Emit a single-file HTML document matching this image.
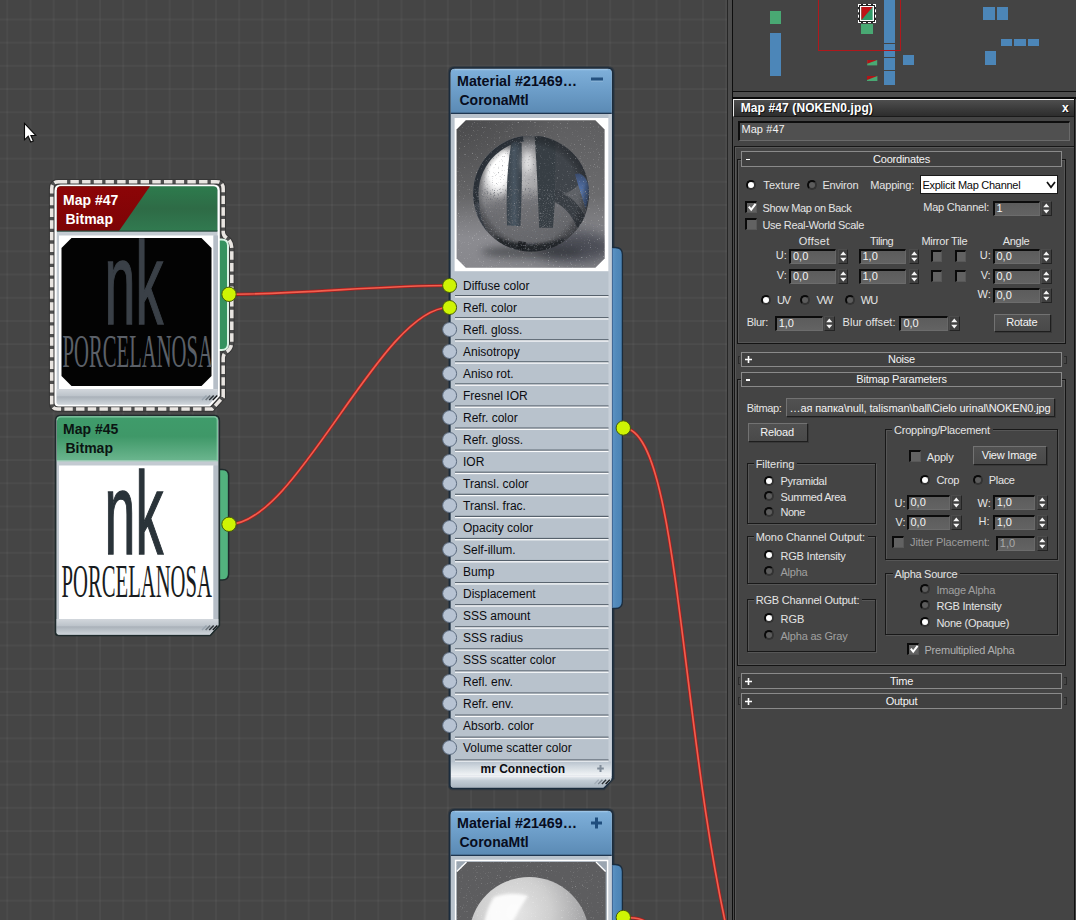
<!DOCTYPE html>
<html lang="en"><head><meta charset="utf-8"><title>Slate Material Editor</title>
<style>
*{box-sizing:border-box;margin:0;padding:0}
html,body{width:1076px;height:920px;overflow:hidden;background:#454545}
body{font-family:"Liberation Sans",sans-serif;font-size:11px;color:#e6e6e6;position:relative}
#root{position:absolute;left:0;top:0;width:1076px;height:920px;overflow:hidden}
#canvas{position:absolute;left:0;top:0;width:727px;height:920px;background-color:#454545;
 background-image:linear-gradient(90deg,rgba(255,255,255,.025) 0,rgba(255,255,255,.045) 1px,rgba(255,255,255,.025) 2px,transparent 2px),linear-gradient(180deg,rgba(255,255,255,.025) 0,rgba(255,255,255,.045) 1px,rgba(255,255,255,.025) 2px,transparent 2px);
 background-size:23.2px 23.2px;background-position:6.3px 18.5px;overflow:hidden}
#panel{position:absolute;left:727px;top:0;width:349px;height:920px;background:#444}
.t{position:absolute;white-space:nowrap;font-size:11px;line-height:13px;color:#e4e4e4}
.sh{text-shadow:1px 1px 0 #111}
</style></head>
<body><div id="root">
<div id="canvas">
<svg width="727" height="920" viewBox="0 0 727 920" style="position:absolute;left:0;top:0" font-family="Liberation Sans, sans-serif">
<defs>
<linearGradient id="gh47" x1="0" y1="0" x2="0" y2="1"><stop offset="0" stop-color="#2d7b4d"/><stop offset=".5" stop-color="#2e6b46"/><stop offset="1" stop-color="#317a50"/></linearGradient>
<linearGradient id="gh45" x1="0" y1="0" x2="0" y2="1"><stop offset="0" stop-color="#3f9c6b"/><stop offset=".45" stop-color="#3f9868"/><stop offset="1" stop-color="#6cb68f"/></linearGradient>
<linearGradient id="gred" x1="0" y1="0" x2="0" y2="1"><stop offset="0" stop-color="#8c0507"/><stop offset="1" stop-color="#7d0406"/></linearGradient>
<linearGradient id="gbot" x1="0" y1="0" x2="0" y2="1"><stop offset="0" stop-color="#d2d7dc"/><stop offset=".45" stop-color="#bcc3ca"/><stop offset=".5" stop-color="#a9b1b9"/><stop offset="1" stop-color="#cfd5da"/></linearGradient>
<linearGradient id="ghm1" x1="0" y1="0" x2="0" y2="1"><stop offset="0" stop-color="#7fb0da"/><stop offset=".5" stop-color="#6c9dc8"/><stop offset="1" stop-color="#5b8ab4"/></linearGradient>
<linearGradient id="ghm2" x1="0" y1="0" x2="0" y2="1"><stop offset="0" stop-color="#7fb0da"/><stop offset=".5" stop-color="#6c9dc8"/><stop offset="1" stop-color="#5b8ab4"/></linearGradient>
<linearGradient id="gtab" x1="0" y1="0" x2="1" y2="0"><stop offset="0" stop-color="#5e95c6"/><stop offset=".4" stop-color="#528abb"/><stop offset="1" stop-color="#4a82b4"/></linearGradient>
<linearGradient id="gbg1" x1="0" y1="0" x2="0" y2="1"><stop offset="0" stop-color="#5d5d5f"/><stop offset=".5" stop-color="#6b6b6d"/><stop offset=".78" stop-color="#8b8b90"/><stop offset="1" stop-color="#87878c"/></linearGradient>
<radialGradient id="gbg1b" cx="0" cy="0" r=".7"><stop offset="0" stop-color="#000" stop-opacity=".22"/><stop offset="1" stop-color="#000" stop-opacity="0"/></radialGradient>
<radialGradient id="gsph1" cx=".4" cy=".42" r=".62"><stop offset="0" stop-color="#bcbcbe"/><stop offset=".5" stop-color="#939396"/><stop offset=".82" stop-color="#6a6e73"/><stop offset="1" stop-color="#464a50"/></radialGradient>
<linearGradient id="gstem" x1="0" y1="0" x2="1" y2="0"><stop offset="0" stop-color="#39424a"/><stop offset=".5" stop-color="#485561"/><stop offset="1" stop-color="#363e46"/></linearGradient>
<linearGradient id="gblue" x1="0" y1="0" x2="1" y2="1"><stop offset="0" stop-color="#3a4868"/><stop offset=".5" stop-color="#5f84c4"/><stop offset="1" stop-color="#34486c"/></linearGradient>
<filter id="blurA" x="-50%" y="-50%" width="200%" height="200%"><feGaussianBlur stdDeviation="38"/></filter>
<filter id="blurB" x="-50%" y="-50%" width="200%" height="200%"><feGaussianBlur stdDeviation="22"/></filter>
<filter id="blurC" x="-50%" y="-50%" width="200%" height="200%"><feGaussianBlur stdDeviation="10"/></filter>
<filter id="blurE" x="-20%" y="-20%" width="140%" height="140%"><feGaussianBlur stdDeviation="3"/></filter>
<filter id="blurD" x="-50%" y="-50%" width="200%" height="200%"><feGaussianBlur stdDeviation="6"/></filter>
<filter id="noiseD2" x="0" y="0" width="100%" height="100%"><feTurbulence type="fractalNoise" baseFrequency="0.12" numOctaves="2" seed="23"/><feColorMatrix type="matrix" values="0 0 0 0 0.15  0 0 0 0 0.16  0 0 0 0 0.18  0 4 0 0 -2.2"/></filter>
<filter id="noiseD" x="0" y="0" width="100%" height="100%"><feTurbulence type="fractalNoise" baseFrequency="0.11" numOctaves="2" seed="11"/><feColorMatrix type="matrix" values="0 0 0 0 0.12  0 0 0 0 0.13  0 0 0 0 0.15  0 5 0 0 -3.2"/></filter>
<radialGradient id="grim1" cx=".5" cy=".5" r=".5"><stop offset=".82" stop-color="#000" stop-opacity="0"/><stop offset="1" stop-color="#1a1d22" stop-opacity=".5"/></radialGradient>
<linearGradient id="gmr" x1="0" y1="0" x2="0" y2="1"><stop offset="0" stop-color="#b9c3ce"/><stop offset=".35" stop-color="#cfd7de"/><stop offset="1" stop-color="#f1f4f6"/></linearGradient>
<linearGradient id="gbot2" x1="0" y1="0" x2="0" y2="1"><stop offset="0" stop-color="#e3e8ed"/><stop offset=".35" stop-color="#c2ccd5"/><stop offset="1" stop-color="#aab5c0"/></linearGradient>
<filter id="blur3" x="-50%" y="-50%" width="200%" height="200%"><feGaussianBlur stdDeviation="3.2"/></filter>
<filter id="blur4" x="-50%" y="-50%" width="200%" height="200%"><feGaussianBlur stdDeviation="5"/></filter>
<filter id="noise" x="0" y="0" width="100%" height="100%"><feTurbulence type="fractalNoise" baseFrequency="0.13" numOctaves="2" seed="3"/><feColorMatrix type="matrix" values="0 0 0 0 1  0 0 0 0 1  0 0 0 0 1  5 0 0 0 -3.35"/></filter>
<clipPath id="clip47"><path d="M71.5,238 H201.5 L211.5,248 V376 L201.5,386 H71.5 L61.5,376 V248 Z"/></clipPath>
<clipPath id="clip45"><rect x="59" y="465.5" width="154.5" height="153.5"/></clipPath>
<clipPath id="clipM1"><path d="M465.8,120.2 H595.4 L604.6,129.4 V258.6 L595.4,267.8 H465.8 L456.6,258.6 V129.4 Z"/></clipPath>
<clipPath id="clipS1"><circle cx="455" cy="452" r="347"/></clipPath>
<radialGradient id="gsph2" cx=".38" cy=".3" r=".75"><stop offset="0" stop-color="#e6e6e6"/><stop offset=".4" stop-color="#cfcfcf"/><stop offset=".8" stop-color="#a2a2a4"/><stop offset="1" stop-color="#77777a"/></radialGradient><filter id="blurS" x="-30%" y="-30%" width="160%" height="160%"><feGaussianBlur stdDeviation="1.6"/></filter><filter id="noise2" x="0" y="0" width="100%" height="100%"><feTurbulence type="fractalNoise" baseFrequency="0.8" numOctaves="2" seed="5"/><feColorMatrix type="matrix" values="0 0 0 0 1  0 0 0 0 1  0 0 0 0 1  5 0 0 0 -3.3"/></filter>
</defs>
<path d="M229,294.3 C297,294.3 381,285.5 449,285.5" fill="none" stroke="#a81d1d" stroke-width="3.2"/><path d="M229,294.3 C297,294.3 381,285.5 449,285.5" fill="none" stroke="#f0604f" stroke-width="1.6"/>
<path d="M229,524.3 C297,524.3 381,307.5 449,307.5" fill="none" stroke="#a81d1d" stroke-width="3.2"/><path d="M229,524.3 C297,524.3 381,307.5 449,307.5" fill="none" stroke="#f0604f" stroke-width="1.6"/>
<path d="M623.3,428 C679.7,428 679.8,734.6 731.4,949.5" fill="none" stroke="#a81d1d" stroke-width="3.2"/><path d="M623.3,428 C679.7,428 679.8,734.6 731.4,949.5" fill="none" stroke="#f0604f" stroke-width="1.6"/>
<path d="M623,917.5 C640,917.5 646,919 652,930" fill="none" stroke="#a81d1d" stroke-width="3.2"/><path d="M623,917.5 C640,917.5 646,919 652,930" fill="none" stroke="#f0604f" stroke-width="1.6"/>
<path d="M58.7,181.7 H216.2 Q223.2,181.7 223.2,188.7 V232 Q223.2,236 226.2,237.5 Q231.8,241 231.8,249 V341 Q231.8,349 226.2,352 Q223.2,354 223.2,358 V397 L212.2,409 H57.7 Q51.7,409 51.7,403 V188.7 Q51.7,181.7 58.7,181.7 Z" fill="none" stroke="#363636" stroke-width="5.6"/><path d="M58.7,181.7 H216.2 Q223.2,181.7 223.2,188.7 V232 Q223.2,236 226.2,237.5 Q231.8,241 231.8,249 V341 Q231.8,349 226.2,352 Q223.2,354 223.2,358 V397 L212.2,409 H57.7 Q51.7,409 51.7,403 V188.7 Q51.7,181.7 58.7,181.7 Z" fill="none" stroke="#4e4e4e" stroke-width="3.5"/><path d="M58.7,181.7 H216.2 Q223.2,181.7 223.2,188.7 V232 Q223.2,236 226.2,237.5 Q231.8,241 231.8,249 V341 Q231.8,349 226.2,352 Q223.2,354 223.2,358 V397 L212.2,409 H57.7 Q51.7,409 51.7,403 V188.7 Q51.7,181.7 58.7,181.7 Z" fill="none" stroke="#e9e5e1" stroke-width="3.5" stroke-dasharray="8.4 3.3"/>
<path d="M217.7,239.5 H221.7 Q228.0,239.5 228.0,245.5 V344 Q228.0,350 221.7,350 H217.7 Z" fill="#35925f" stroke="#d8f3e4" stroke-width="2"/>
<path d="M60.6,185.7 H213.7 Q218.7,185.7 218.7,190.7 V395.5 L209.7,405.5 H58.6 Q55.6,405.5 55.6,402.5 V190.7 Q55.6,185.7 60.6,185.7 Z" fill="#c3cad1" stroke="#ffffff" stroke-width="2.2"/>
<path d="M60.9,186.3 H213.39999999999998 Q217.39999999999998,186.3 217.39999999999998,190.3 V231 H56.9 V190.3 Q56.9,186.3 60.9,186.3 Z" fill="url(#gh47)"/>
<path d="M60.9,186.3 H150 L119,231 H56.9 V190.3 Q56.9,186.3 60.9,186.3 Z" fill="url(#gred)"/>
<rect x="56.9" y="230.5" width="160.49999999999997" height="1.2" fill="#24483a"/>
<text x="63" y="205.3" font-size="14" font-weight="bold" fill="#ffffff">Map #47</text>
<text x="65.5" y="224.4" font-size="14" font-weight="bold" fill="#ffffff">Bitmap</text>
<rect x="59" y="235.5" width="154.5" height="153.5" fill="#ffffff"/>
<rect x="213.5" y="235.5" width="4.5" height="155.5" fill="#b6bec7"/>
<path d="M56.6,389 H217.7 V395.0 L209.2,404.5 H58.6 Q56.6,404.5 56.6,402.5 Z" fill="url(#gbot)"/>
<path d="M202.0,400.0 l4.5,-4.5" stroke="#9aa5b0" stroke-width="1.4"/>
<path d="M205.6,400.0 l4.5,-4.5" stroke="#6b747c" stroke-width="1.4"/>
<path d="M209.2,400.0 l4.5,-4.5" stroke="#2a2f33" stroke-width="1.4"/>
<path d="M212.8,400.0 l4.5,-4.5" stroke="#15181a" stroke-width="1.4"/>
<path d="M71.5,238 H201.5 L211.5,248 V376 L201.5,386 H71.5 L61.5,376 V248 Z" fill="#030303"/>
<g clip-path="url(#clip47)">
<text transform="translate(104.5,323.5) scale(0.475,1)" font-size="117" fill="#3a4047" stroke="#3a4047" stroke-width="1.6">nk</text>
<text transform="translate(62.5,367) scale(0.44,1)" font-family="Liberation Serif,serif" font-size="47" fill="#5b6068">PORCELANOSA</text>
</g>
<circle cx="229" cy="294.3" r="7.2" fill="#cef404" stroke="#46590a" stroke-width="1"/>
<path d="M218.29999999999998,469.5 H222.29999999999998 Q228.6,469.5 228.6,475.5 V574 Q228.6,580 222.29999999999998,580 H218.29999999999998 Z" fill="#52b27e" stroke="#1f2b2c" stroke-width="1.5"/>
<path d="M60.6,415.7 H214.29999999999998 Q219.29999999999998,415.7 219.29999999999998,420.7 V625.5 L210.29999999999998,635.5 H58.6 Q55.6,635.5 55.6,632.5 V420.7 Q55.6,415.7 60.6,415.7 Z" fill="#c3cad1" stroke="#1f2b2c" stroke-width="1.7"/>
<path d="M60.9,416.3 H213.99999999999997 Q217.99999999999997,416.3 217.99999999999997,420.3 V461 H56.9 V420.3 Q56.9,416.3 60.9,416.3 Z" fill="url(#gh45)"/>
<rect x="56.9" y="460.2" width="161.09999999999997" height="1.3" fill="#a3cfbb"/>
<path d="M57.1,420.3 Q57.1,416.90000000000003 60.9,416.90000000000003 H213.99999999999997 Q217.29999999999998,416.90000000000003 217.29999999999998,420.3 V461" fill="none" stroke="#8fd0ae" stroke-width="1.3" opacity=".85"/>
<text x="63" y="434.3" font-size="14" font-weight="bold" fill="#0b1512">Map #45</text>
<text x="65.5" y="453.4" font-size="14" font-weight="bold" fill="#0b1512">Bitmap</text>
<rect x="59" y="465.5" width="154.5" height="153.5" fill="#ffffff"/>
<rect x="213.5" y="465.5" width="4.5" height="155.5" fill="#b6bec7"/>
<path d="M56.6,619 H218.29999999999998 V625.0 L209.79999999999998,634.5 H58.6 Q56.6,634.5 56.6,632.5 Z" fill="url(#gbot)"/>
<path d="M202.0,630.0 l4.5,-4.5" stroke="#9aa5b0" stroke-width="1.4"/>
<path d="M205.6,630.0 l4.5,-4.5" stroke="#6b747c" stroke-width="1.4"/>
<path d="M209.2,630.0 l4.5,-4.5" stroke="#2a2f33" stroke-width="1.4"/>
<path d="M212.8,630.0 l4.5,-4.5" stroke="#15181a" stroke-width="1.4"/>
<g clip-path="url(#clip45)">
<text transform="translate(104.5,553.5) scale(0.475,1)" font-size="117" fill="#2a3339" stroke="#2a3339" stroke-width="1.6">nk</text>
<text transform="translate(61.5,597) scale(0.44,1)" font-family="Liberation Serif,serif" font-size="47" fill="#181c20">PORCELANOSA</text>
</g>
<circle cx="229" cy="524.3" r="7.2" fill="#cef404" stroke="#46590a" stroke-width="1"/>
<path d="M454.8,68 H607.7 Q612.7,68 612.7,73 V778.3 L603.7,788.3 H452.8 Q449.8,788.3 449.8,785.3 V73 Q449.8,68 454.8,68 Z" fill="none" stroke="#26313c" stroke-width="4" opacity=".55"/>
<path d="M454.8,68 H607.7 Q612.7,68 612.7,73 V778.3 L603.7,788.3 H452.8 Q449.8,788.3 449.8,785.3 V73 Q449.8,68 454.8,68 Z" fill="#b8c2cc" stroke="#1b2c3d" stroke-width="1.7"/>
<path d="M611.8000000000001,247.5 H615.4 Q622.4,247.5 622.4,254.5 V601.5 Q622.4,608.5 615.4,608.5 H611.8000000000001" fill="url(#gtab)" stroke="#1b2c3d" stroke-width="1.3"/><path d="M612.3000000000001,248.2 V607.8" stroke="#3d628f" stroke-width="1.1"/>
<rect x="608.5" y="114" width="3.3" height="662.3" fill="#c7cfd8"/>
<path d="M454.8,69 H607.7 Q611.7,69 611.7,73 V113 H450.8 V73 Q450.8,69 454.8,69 Z" fill="url(#ghm1)"/>
<path d="M454.8,69.7 H607.7" stroke="#9cc4e6" stroke-width="1.2"/>
<rect x="450.8" y="112.7" width="160.90000000000003" height="1.3" fill="#1f3650"/>
<text x="457" y="86.4" font-size="14" font-weight="bold" fill="#080d20" textLength="120" lengthAdjust="spacingAndGlyphs">Material #21469…</text>
<text x="459.5" y="105.4" font-size="14" font-weight="bold" fill="#080d20">CoronaMtl</text>
<rect x="591" y="77.5" width="12" height="3.2" fill="#24517f"/><rect x="591" y="80.7" width="12" height="1" fill="#8db5d8"/>
<rect x="454.6" y="118" width="153.8" height="153.2" fill="#ffffff"/>
<g clip-path="url(#clipM1)">
<g transform="translate(455,118) scale(0.16739)">
<rect x="0" y="0" width="920" height="920" fill="url(#gbg1)"/>
<rect x="0" y="0" width="920" height="920" fill="url(#gbg1b)"/>
<ellipse cx="720" cy="770" rx="230" ry="95" fill="#3b3c46" opacity=".8" filter="url(#blurA)"/>
<ellipse cx="460" cy="800" rx="300" ry="40" fill="#2f3036" opacity=".55" filter="url(#blurB)"/>
<g clip-path="url(#clipS1)">
<circle cx="455" cy="452" r="347" fill="url(#gsph1)"/>
<ellipse cx="450" cy="640" rx="360" ry="190" fill="#66666a" opacity=".8" filter="url(#blurA)"/>
<ellipse cx="262" cy="310" rx="88" ry="150" fill="#ffffff" opacity=".85" filter="url(#blurB)" transform="rotate(8 262 310)"/>
<ellipse cx="262" cy="302" rx="62" ry="108" fill="#ffffff" filter="url(#blurC)" transform="rotate(8 262 302)"/>
<path d="M100,520 A347,347 0 0 1 405,108 L411,140 A315,315 0 0 0 145,507 Z" fill="#39414a" filter="url(#blurE)"/>
<path d="M100,520 C110,600 140,660 180,700 L190,672 C160,620 148,565 145,507 Z" fill="#4c5560" opacity=".85"/>
<path d="M337,150 C356,141 380,141 398,150 C402,300 399,480 391,646 L311,642 C305,480 309,300 337,150Z" fill="url(#gstem)"/>
<ellipse cx="436" cy="262" rx="30" ry="68" fill="#ffffff" opacity=".8" filter="url(#blurB)"/>
<path d="M476,112 C520,104 562,106 602,122 C608,300 600,500 585,656 L503,656 C496,480 490,300 476,112Z" fill="#373e44"/>
<path d="M600,120 C690,150 760,230 795,335 C740,410 690,450 598,480 Z" fill="#3f444a"/>
<path d="M598,430 C690,455 745,520 778,590 C768,625 752,655 738,670 C700,585 655,525 596,505Z" fill="#383d43"/>
<path d="M640,455 C690,440 720,420 745,395 C770,440 780,500 778,590 C745,520 700,470 640,455Z" fill="#5a5d62" opacity=".8"/>
<path d="M716,335 C750,322 782,348 797,400 C803,450 795,500 780,540 C762,480 738,410 716,335Z" fill="url(#gblue)"/>
<path d="M235,700 C330,755 480,780 660,715 L620,790 C500,822 350,812 262,748Z" fill="#22262b" opacity=".85" filter="url(#blurD)"/>
<path d="M380,735 L425,742 L408,792 L370,786Z" fill="#1c1f23" opacity=".85"/>
<circle cx="455" cy="452" r="347" fill="url(#grim1)"/>
<circle cx="455" cy="452" r="347" filter="url(#noiseD)" opacity=".5"/>
<rect x="100" y="430" width="720" height="380" filter="url(#noiseD2)" opacity=".75"/>
</g>
<rect x="0" y="0" width="920" height="920" filter="url(#noise)" opacity=".3"/>
</g>
</g>
<rect x="455" y="295.00" width="153.5" height="1.25" fill="#56616c"/><rect x="455" y="296.20" width="153.5" height="1.3" fill="#fafbfc"/>
<circle cx="449.6" cy="285.5" r="7" fill="#cef404" stroke="#46590a" stroke-width="1"/>
<text x="463" y="289.8" font-size="12" fill="#0c0c10">Diffuse color</text>
<rect x="455" y="317.08" width="153.5" height="1.25" fill="#56616c"/><rect x="455" y="318.28" width="153.5" height="1.3" fill="#fafbfc"/>
<circle cx="449.6" cy="307.5" r="7" fill="#cef404" stroke="#46590a" stroke-width="1"/>
<text x="463" y="311.8" font-size="12" fill="#0c0c10">Refl. color</text>
<rect x="455" y="339.16" width="153.5" height="1.25" fill="#56616c"/><rect x="455" y="340.36" width="153.5" height="1.3" fill="#fafbfc"/>
<circle cx="449.6" cy="329.5" r="7" fill="#b7c3d3" stroke="#5d6c80" stroke-width="1"/>
<text x="463" y="333.8" font-size="12" fill="#0c0c10">Refl. gloss.</text>
<rect x="455" y="361.24" width="153.5" height="1.25" fill="#56616c"/><rect x="455" y="362.44" width="153.5" height="1.3" fill="#fafbfc"/>
<circle cx="449.6" cy="351.5" r="7" fill="#b7c3d3" stroke="#5d6c80" stroke-width="1"/>
<text x="463" y="355.8" font-size="12" fill="#0c0c10">Anisotropy</text>
<rect x="455" y="383.32" width="153.5" height="1.25" fill="#56616c"/><rect x="455" y="384.52" width="153.5" height="1.3" fill="#fafbfc"/>
<circle cx="449.6" cy="373.5" r="7" fill="#b7c3d3" stroke="#5d6c80" stroke-width="1"/>
<text x="463" y="377.8" font-size="12" fill="#0c0c10">Aniso rot.</text>
<rect x="455" y="405.40" width="153.5" height="1.25" fill="#56616c"/><rect x="455" y="406.60" width="153.5" height="1.3" fill="#fafbfc"/>
<circle cx="449.6" cy="395.5" r="7" fill="#b7c3d3" stroke="#5d6c80" stroke-width="1"/>
<text x="463" y="399.8" font-size="12" fill="#0c0c10">Fresnel IOR</text>
<rect x="455" y="427.48" width="153.5" height="1.25" fill="#56616c"/><rect x="455" y="428.68" width="153.5" height="1.3" fill="#fafbfc"/>
<circle cx="449.6" cy="417.5" r="7" fill="#b7c3d3" stroke="#5d6c80" stroke-width="1"/>
<text x="463" y="421.8" font-size="12" fill="#0c0c10">Refr. color</text>
<rect x="455" y="449.56" width="153.5" height="1.25" fill="#56616c"/><rect x="455" y="450.76" width="153.5" height="1.3" fill="#fafbfc"/>
<circle cx="449.6" cy="439.5" r="7" fill="#b7c3d3" stroke="#5d6c80" stroke-width="1"/>
<text x="463" y="443.8" font-size="12" fill="#0c0c10">Refr. gloss.</text>
<rect x="455" y="471.64" width="153.5" height="1.25" fill="#56616c"/><rect x="455" y="472.84" width="153.5" height="1.3" fill="#fafbfc"/>
<circle cx="449.6" cy="461.5" r="7" fill="#b7c3d3" stroke="#5d6c80" stroke-width="1"/>
<text x="463" y="465.8" font-size="12" fill="#0c0c10">IOR</text>
<rect x="455" y="493.72" width="153.5" height="1.25" fill="#56616c"/><rect x="455" y="494.92" width="153.5" height="1.3" fill="#fafbfc"/>
<circle cx="449.6" cy="483.5" r="7" fill="#b7c3d3" stroke="#5d6c80" stroke-width="1"/>
<text x="463" y="487.8" font-size="12" fill="#0c0c10">Transl. color</text>
<rect x="455" y="515.80" width="153.5" height="1.25" fill="#56616c"/><rect x="455" y="517.00" width="153.5" height="1.3" fill="#fafbfc"/>
<circle cx="449.6" cy="505.5" r="7" fill="#b7c3d3" stroke="#5d6c80" stroke-width="1"/>
<text x="463" y="509.8" font-size="12" fill="#0c0c10">Transl. frac.</text>
<rect x="455" y="537.88" width="153.5" height="1.25" fill="#56616c"/><rect x="455" y="539.08" width="153.5" height="1.3" fill="#fafbfc"/>
<circle cx="449.6" cy="527.5" r="7" fill="#b7c3d3" stroke="#5d6c80" stroke-width="1"/>
<text x="463" y="531.8" font-size="12" fill="#0c0c10">Opacity color</text>
<rect x="455" y="559.96" width="153.5" height="1.25" fill="#56616c"/><rect x="455" y="561.16" width="153.5" height="1.3" fill="#fafbfc"/>
<circle cx="449.6" cy="549.5" r="7" fill="#b7c3d3" stroke="#5d6c80" stroke-width="1"/>
<text x="463" y="553.8" font-size="12" fill="#0c0c10">Self-illum.</text>
<rect x="455" y="582.04" width="153.5" height="1.25" fill="#56616c"/><rect x="455" y="583.24" width="153.5" height="1.3" fill="#fafbfc"/>
<circle cx="449.6" cy="571.5" r="7" fill="#b7c3d3" stroke="#5d6c80" stroke-width="1"/>
<text x="463" y="575.8" font-size="12" fill="#0c0c10">Bump</text>
<rect x="455" y="604.12" width="153.5" height="1.25" fill="#56616c"/><rect x="455" y="605.32" width="153.5" height="1.3" fill="#fafbfc"/>
<circle cx="449.6" cy="593.5" r="7" fill="#b7c3d3" stroke="#5d6c80" stroke-width="1"/>
<text x="463" y="597.8" font-size="12" fill="#0c0c10">Displacement</text>
<rect x="455" y="626.20" width="153.5" height="1.25" fill="#56616c"/><rect x="455" y="627.40" width="153.5" height="1.3" fill="#fafbfc"/>
<circle cx="449.6" cy="615.5" r="7" fill="#b7c3d3" stroke="#5d6c80" stroke-width="1"/>
<text x="463" y="619.8" font-size="12" fill="#0c0c10">SSS amount</text>
<rect x="455" y="648.28" width="153.5" height="1.25" fill="#56616c"/><rect x="455" y="649.48" width="153.5" height="1.3" fill="#fafbfc"/>
<circle cx="449.6" cy="637.5" r="7" fill="#b7c3d3" stroke="#5d6c80" stroke-width="1"/>
<text x="463" y="641.8" font-size="12" fill="#0c0c10">SSS radius</text>
<rect x="455" y="670.36" width="153.5" height="1.25" fill="#56616c"/><rect x="455" y="671.56" width="153.5" height="1.3" fill="#fafbfc"/>
<circle cx="449.6" cy="659.5" r="7" fill="#b7c3d3" stroke="#5d6c80" stroke-width="1"/>
<text x="463" y="663.8" font-size="12" fill="#0c0c10">SSS scatter color</text>
<rect x="455" y="692.44" width="153.5" height="1.25" fill="#56616c"/><rect x="455" y="693.64" width="153.5" height="1.3" fill="#fafbfc"/>
<circle cx="449.6" cy="681.5" r="7" fill="#b7c3d3" stroke="#5d6c80" stroke-width="1"/>
<text x="463" y="685.8" font-size="12" fill="#0c0c10">Refl. env.</text>
<rect x="455" y="714.52" width="153.5" height="1.25" fill="#56616c"/><rect x="455" y="715.72" width="153.5" height="1.3" fill="#fafbfc"/>
<circle cx="449.6" cy="703.5" r="7" fill="#b7c3d3" stroke="#5d6c80" stroke-width="1"/>
<text x="463" y="707.8" font-size="12" fill="#0c0c10">Refr. env.</text>
<rect x="455" y="736.60" width="153.5" height="1.25" fill="#56616c"/><rect x="455" y="737.80" width="153.5" height="1.3" fill="#fafbfc"/>
<circle cx="449.6" cy="725.5" r="7" fill="#b7c3d3" stroke="#5d6c80" stroke-width="1"/>
<text x="463" y="729.8" font-size="12" fill="#0c0c10">Absorb. color</text>
<rect x="455" y="759.40" width="153.5" height="1.25" fill="#56616c"/><rect x="455" y="760.60" width="153.5" height="1.3" fill="#fafbfc"/>
<circle cx="449.6" cy="747.5" r="7" fill="#b7c3d3" stroke="#5d6c80" stroke-width="1"/>
<text x="463" y="751.8" font-size="12" fill="#0c0c10">Volume scatter color</text>
<rect x="451" y="761.7" width="160" height="13.6" fill="url(#gmr)"/>
<text x="480.5" y="772.6" font-size="12" font-weight="bold" fill="#0c0c10">mr Connection</text>
<path d="M597.2,768.5 h6.6 M600.5,765 v7" stroke="#808c99" stroke-width="2"/>
<rect x="451" y="775.3" width="160" height="1.6" fill="#f4f6f8"/>
<path d="M451,776.9 H611.2 V780 L603.5,787.6 H453 Q451,787.6 451,785.6 Z" fill="url(#gbot2)"/>
<path d="M594.5,784 l4.2,-4.2" stroke="#a3adb8" stroke-width="1.3"/>
<path d="M598.2,784 l4.2,-4.2" stroke="#7a848e" stroke-width="1.3"/>
<path d="M601.9,784 l4.2,-4.2" stroke="#2a2f33" stroke-width="1.3"/>
<path d="M605.6,784 l4.2,-4.2" stroke="#15181a" stroke-width="1.3"/>
<circle cx="623.3" cy="428" r="7.2" fill="#cef404" stroke="#46590a" stroke-width="1"/>
<path d="M454.8,810 H607.7 Q612.7,810 612.7,815 V940 H449.8 V815 Q449.8,810 454.8,810 Z" fill="none" stroke="#26313c" stroke-width="4" opacity=".55"/>
<path d="M454.8,810 H607.7 Q612.7,810 612.7,815 V940 H449.8 V815 Q449.8,810 454.8,810 Z" fill="#b8c2cc" stroke="#1b2c3d" stroke-width="1.7"/>
<path d="M611.8000000000001,864.5 H615.4 Q622.4,864.5 622.4,871.5 V940 H611.8000000000001" fill="url(#gtab)" stroke="#1b2c3d" stroke-width="1.3"/><path d="M612.3000000000001,865.2 V940" stroke="#3d628f" stroke-width="1.1"/>
<rect x="608.5" y="856" width="3.3" height="72" fill="#c7cfd8"/>
<path d="M454.8,811 H607.7 Q611.7,811 611.7,815 V855 H450.8 V815 Q450.8,811 454.8,811 Z" fill="url(#ghm2)"/>
<path d="M454.8,811.7 H607.7" stroke="#9cc4e6" stroke-width="1.2"/>
<rect x="450.8" y="854.7" width="160.90000000000003" height="1.3" fill="#1f3650"/>
<text x="457" y="828.4" font-size="14" font-weight="bold" fill="#080d20" textLength="120" lengthAdjust="spacingAndGlyphs">Material #21469…</text>
<text x="459.5" y="847.4" font-size="14" font-weight="bold" fill="#080d20">CoronaMtl</text>
<path d="M591,823 h11 M596.5,817.5 v11" stroke="#1f4d7d" stroke-width="3"/>
<g>
<rect x="455.6" y="860.5" width="152" height="70" fill="#9aa5b0" stroke="#ffffff" stroke-width="1.5"/>
<path d="M466.5,862 H596 L605.6,871.5 V930 H456.8 V871.5 Z" fill="#5d5d5f"/>
<path d="M456.8,871.5 L466.5,862 M596,862 L605.6,871.5" stroke="#ffffff" stroke-width="1.3" fill="none"/>
<circle cx="529.2" cy="937" r="60" fill="url(#gsph2)"/>
<path d="M494,897 C505,893 518,893 528,896 C522,905 516,914 512,924 L484,924 C486,913 489,905 494,897Z" fill="#ffffff" opacity=".9" filter="url(#blurS)"/>
<rect x="456.8" y="862" width="149" height="60" filter="url(#noise2)" opacity=".25"/>
</g>
<circle cx="623.3" cy="917.5" r="7.2" fill="#cef404" stroke="#46590a" stroke-width="1"/>
<path d="M24.5,123.3 V139.8 L28.2,136.3 L30.7,142 L33.4,140.9 L30.9,135.6 L35.8,135.3 Z" fill="#ffffff" stroke="#0a0a0a" stroke-width="1.1" stroke-linejoin="miter"/>
</svg>
</div>
<div id="panel">
<div style="position:absolute;left:0px;top:0px;width:1px;height:920px;background:#262626"></div>
<div style="position:absolute;left:1px;top:0px;width:4px;height:920px;background:#4c4c4c"></div>
<div style="position:absolute;left:5px;top:0px;width:1px;height:920px;background:#0e0e0e"></div>
<div style="position:absolute;left:6px;top:0px;width:1px;height:920px;background:#4a4a4a"></div>
<div style="position:absolute;left:6px;top:0px;width:343px;height:91px;background:#444"></div>
<div style="position:absolute;left:6px;top:91px;width:343px;height:1px;background:#0e0e0e"></div>
<div style="position:absolute;left:6px;top:92px;width:343px;height:4.5px;background:#4e4e4e"></div>
<div style="position:absolute;left:43px;top:11px;width:11px;height:13px;background:#49a873"></div>
<div style="position:absolute;left:43px;top:33px;width:11px;height:43px;background:#4c86b8"></div>
<div style="position:absolute;left:134px;top:24px;width:12px;height:10px;background:#49a873"></div>
<div style="position:absolute;left:157px;top:0px;width:11px;height:43px;background:#4c86b8"></div>
<div style="position:absolute;left:157px;top:44px;width:11px;height:6px;background:#4c86b8"></div>
<div style="position:absolute;left:157px;top:51px;width:11px;height:6px;background:#4c86b8"></div>
<div style="position:absolute;left:157px;top:58px;width:11px;height:12px;background:#4c86b8"></div>
<div style="position:absolute;left:157px;top:71px;width:11px;height:14px;background:#4c86b8"></div>
<div style="position:absolute;left:176px;top:55px;width:11px;height:10px;background:#4c86b8"></div>
<div style="position:absolute;left:256px;top:7px;width:12px;height:13px;background:#4c86b8"></div>
<div style="position:absolute;left:270px;top:7px;width:11px;height:13px;background:#4c86b8"></div>
<div style="position:absolute;left:274px;top:39px;width:11px;height:7px;background:#4c86b8"></div>
<div style="position:absolute;left:287px;top:39px;width:12px;height:7px;background:#4c86b8"></div>
<div style="position:absolute;left:301px;top:39px;width:11px;height:7px;background:#4c86b8"></div>
<div style="position:absolute;left:258px;top:51px;width:11px;height:14px;background:#4c86b8"></div>
<div style="position:absolute;left:91px;top:-2px;width:83px;height:53px;border:1px solid #b0181c"></div>
<div style="position:absolute;left:131px;top:3.7px;width:18px;height:19.5px;border:1.3px dashed #fff;background:#222"></div>
<div style="position:absolute;left:133px;top:5.8px;width:14px;height:15.2px;background:#fff"></div>
<svg style="position:absolute;left:134px;top:6.8px" width="12" height="13.2" viewBox="0 0 12 14"><rect width="12" height="14" fill="#2f9a68"/><path d="M0,0 H12 L0,14 Z" fill="#c01418"/></svg>
<svg style="position:absolute;left:139px;top:60.2px" width="12.4" height="5.4" viewBox="0 0 13 7"><rect width="13" height="7" fill="#49a873"/><path d="M0,0 H13 L0,5 Z" fill="#b01418"/></svg>
<svg style="position:absolute;left:139px;top:75.8px" width="12.4" height="5.6" viewBox="0 0 13 7"><rect width="13" height="7" fill="#49a873"/><path d="M0,0 H13 L0,5 Z" fill="#b01418"/></svg>
<div style="position:absolute;left:5px;top:96.5px;width:344px;height:2px;background:#0a0a0a"></div>
<div style="position:absolute;left:6px;top:98.5px;width:342px;height:18.5px;background:linear-gradient(#4e4e4e,#3b3b3b 55%,#2d2d2d);border-top:1.5px solid #f0f0f0;border-left:1.5px solid #e8e8e8;border-bottom:1px solid #1a1a1a"></div>
<span class="t sh" style="left:13.7px;top:100.94px;letter-spacing:0.113px;font-size:12px;line-height:14px;font-weight:bold;color:#ffffff;">Map #47 (NOKEN0.jpg)</span>
<span class="t sh" style="left:335px;top:100.94px;letter-spacing:0.312px;font-size:12px;line-height:14px;font-weight:bold;color:#ffffff;">x</span>
<div style="position:absolute;left:11px;top:121px;width:332px;height:20.4px;background:#505050;border:2px solid #0e0e0e;border-right:1px solid #6a6a6a;border-bottom:1px solid #6a6a6a"></div>
<span class="t" style="left:14.4px;top:122.99px;letter-spacing:0.084px;color:#f2f2f2;">Map #47</span>
<div style="position:absolute;left:7px;top:146px;width:341px;height:800px;border:1px solid #161616;box-shadow:inset 1px 1px 0 #585858"></div>
<div style="position:absolute;left:347px;top:97px;width:1px;height:830px;background:#101010"></div>
<div style="position:absolute;left:9.7px;top:159px;width:329.6px;height:184.9px;border:1px solid #141414;box-shadow:inset 0 0 0 1px #565656"></div>
<div style="position:absolute;left:14.2px;top:151.3px;width:321.0px;height:15.8px;border:1px solid #8a8a8a;background:#404040"></div>
<span class="t" style="left:146.02px;top:152.79px;letter-spacing:-0.216px;color:#f4f4f4;">Coordinates</span>
<div style="position:absolute;left:18.5px;top:158.9px;width:4px;height:1.6px;background:#fff"></div>
<div style="position:absolute;left:19.3px;top:179.5px;width:10px;height:10px;border-radius:50%;background:#ffffff;border:2.4px solid #0a0a0a;border-right-color:#333;border-bottom-color:#333"></div>
<span class="t" style="left:36.3px;top:178.69px;letter-spacing:0.103px;">Texture</span>
<div style="position:absolute;left:79.5px;top:179.5px;width:10px;height:10px;border-radius:50%;background:#5c5c5c;border:2px solid #0a0a0a;border-right-color:#333;border-bottom-color:#333"></div>
<span class="t" style="left:95.5px;top:178.69px;letter-spacing:-0.214px;">Environ</span>
<span class="t" style="left:143.3px;top:178.69px;letter-spacing:-0.183px;">Mapping:</span>
<div style="position:absolute;left:192.5px;top:175px;width:138.5px;height:19.2px;background:#ffffff;border:1.5px solid #1a1a1a"></div>
<span class="t" style="left:195.4px;top:178.69px;letter-spacing:-0.267px;color:#0a0a0a;">Explicit Map Channel</span>
<svg style="position:absolute;left:318.5px;top:181px" width="10" height="8" viewBox="0 0 10 8"><path d="M1,1 L5,6.3 L9,1" fill="none" stroke="#111" stroke-width="1.7"/></svg>
<div style="position:absolute;left:18.0px;top:201px;width:12px;height:12px;background:#626262;border:2px solid #0a0a0a;border-right:1px solid #585858;border-bottom:1px solid #585858"></div>
<svg style="position:absolute;left:18.8px;top:202px" width="12" height="12" viewBox="0 0 12 12"><path d="M2.8,4.6 L5.2,7.6 L9.6,1.8" fill="none" stroke="#ffffff" stroke-width="2"/></svg>
<span class="t" style="left:35.5px;top:201.69px;letter-spacing:-0.374px;">Show Map on Back</span>
<span class="t" style="left:196.2px;top:201.19px;letter-spacing:-0.225px;">Map Channel:</span>
<div style="position:absolute;left:265.5px;top:200.5px;width:47.3px;height:15px;background:linear-gradient(#5c5c5c,#636363);border:2px solid #0c0c0c;border-right:1px solid #686868;border-bottom:1px solid #6c6c6c"></div>
<span class="t" style="left:269.5px;top:201.99px;color:#f4f4f4;">1</span>
<div style="position:absolute;left:314.0px;top:200.5px;width:10.9px;height:15px;background:#404040;border:1px solid #4c4c4c;border-right-color:#242424;border-bottom-color:#242424"></div>
<svg style="position:absolute;left:314.0px;top:200.5px" width="10.9" height="15" viewBox="0 0 10.9 15"><path d="M2.2,6.2 L5.3,2.6 L8.4,6.2 Z M2.2,8.8 L5.3,12.4 L8.4,8.8 Z" fill="#f4f4f4"/></svg>
<div style="position:absolute;left:18.0px;top:218px;width:12px;height:12px;background:#626262;border:2px solid #0a0a0a;border-right:1px solid #585858;border-bottom:1px solid #585858"></div>
<span class="t" style="left:35.5px;top:218.69px;letter-spacing:-0.326px;">Use Real-World Scale</span>
<span class="t" style="left:71.8px;top:235.09px;letter-spacing:0.257px;">Offset</span>
<span class="t" style="left:143px;top:235.09px;letter-spacing:-0.432px;">Tiling</span>
<span class="t" style="left:194.4px;top:235.09px;letter-spacing:-0.263px;">Mirror Tile</span>
<span class="t" style="left:275.8px;top:235.09px;letter-spacing:-0.328px;">Angle</span>
<span class="t" style="left:48.8px;top:248.99px;">U:</span>
<div style="position:absolute;left:62px;top:248.5px;width:47.3px;height:15px;background:linear-gradient(#5c5c5c,#636363);border:2px solid #0c0c0c;border-right:1px solid #686868;border-bottom:1px solid #6c6c6c"></div>
<span class="t" style="left:66px;top:249.99px;color:#f4f4f4;">0,0</span>
<div style="position:absolute;left:110.5px;top:248.5px;width:10.9px;height:15px;background:#404040;border:1px solid #4c4c4c;border-right-color:#242424;border-bottom-color:#242424"></div>
<svg style="position:absolute;left:110.5px;top:248.5px" width="10.9" height="15" viewBox="0 0 10.9 15"><path d="M2.2,6.2 L5.3,2.6 L8.4,6.2 Z M2.2,8.8 L5.3,12.4 L8.4,8.8 Z" fill="#f4f4f4"/></svg>
<div style="position:absolute;left:131.5px;top:248.5px;width:47.3px;height:15px;background:linear-gradient(#5c5c5c,#636363);border:2px solid #0c0c0c;border-right:1px solid #686868;border-bottom:1px solid #6c6c6c"></div>
<span class="t" style="left:135.5px;top:249.99px;color:#f4f4f4;">1,0</span>
<div style="position:absolute;left:181.5px;top:248.5px;width:10.9px;height:15px;background:#404040;border:1px solid #4c4c4c;border-right-color:#242424;border-bottom-color:#242424"></div>
<svg style="position:absolute;left:181.5px;top:248.5px" width="10.9" height="15" viewBox="0 0 10.9 15"><path d="M2.2,6.2 L5.3,2.6 L8.4,6.2 Z M2.2,8.8 L5.3,12.4 L8.4,8.8 Z" fill="#f4f4f4"/></svg>
<div style="position:absolute;left:203.5px;top:250px;width:11.5px;height:11.5px;background:#626262;border:2px solid #0a0a0a;border-right:1px solid #585858;border-bottom:1px solid #585858"></div>
<div style="position:absolute;left:227.7px;top:250px;width:11.5px;height:11.5px;background:#626262;border:2px solid #0a0a0a;border-right:1px solid #585858;border-bottom:1px solid #585858"></div>
<span class="t" style="left:252.7px;top:248.99px;">U:</span>
<div style="position:absolute;left:265.5px;top:248.5px;width:47.3px;height:15px;background:linear-gradient(#5c5c5c,#636363);border:2px solid #0c0c0c;border-right:1px solid #686868;border-bottom:1px solid #6c6c6c"></div>
<span class="t" style="left:269.5px;top:249.99px;color:#f4f4f4;">0,0</span>
<div style="position:absolute;left:314.0px;top:248.5px;width:10.9px;height:15px;background:#404040;border:1px solid #4c4c4c;border-right-color:#242424;border-bottom-color:#242424"></div>
<svg style="position:absolute;left:314.0px;top:248.5px" width="10.9" height="15" viewBox="0 0 10.9 15"><path d="M2.2,6.2 L5.3,2.6 L8.4,6.2 Z M2.2,8.8 L5.3,12.4 L8.4,8.8 Z" fill="#f4f4f4"/></svg>
<span class="t" style="left:49.8px;top:268.99px;">V:</span>
<div style="position:absolute;left:62px;top:268.5px;width:47.3px;height:15px;background:linear-gradient(#5c5c5c,#636363);border:2px solid #0c0c0c;border-right:1px solid #686868;border-bottom:1px solid #6c6c6c"></div>
<span class="t" style="left:66px;top:269.99px;color:#f4f4f4;">0,0</span>
<div style="position:absolute;left:110.5px;top:268.5px;width:10.9px;height:15px;background:#404040;border:1px solid #4c4c4c;border-right-color:#242424;border-bottom-color:#242424"></div>
<svg style="position:absolute;left:110.5px;top:268.5px" width="10.9" height="15" viewBox="0 0 10.9 15"><path d="M2.2,6.2 L5.3,2.6 L8.4,6.2 Z M2.2,8.8 L5.3,12.4 L8.4,8.8 Z" fill="#f4f4f4"/></svg>
<div style="position:absolute;left:131.5px;top:268.5px;width:47.3px;height:15px;background:linear-gradient(#5c5c5c,#636363);border:2px solid #0c0c0c;border-right:1px solid #686868;border-bottom:1px solid #6c6c6c"></div>
<span class="t" style="left:135.5px;top:269.99px;color:#f4f4f4;">1,0</span>
<div style="position:absolute;left:181.5px;top:268.5px;width:10.9px;height:15px;background:#404040;border:1px solid #4c4c4c;border-right-color:#242424;border-bottom-color:#242424"></div>
<svg style="position:absolute;left:181.5px;top:268.5px" width="10.9" height="15" viewBox="0 0 10.9 15"><path d="M2.2,6.2 L5.3,2.6 L8.4,6.2 Z M2.2,8.8 L5.3,12.4 L8.4,8.8 Z" fill="#f4f4f4"/></svg>
<div style="position:absolute;left:203.5px;top:270px;width:11.5px;height:11.5px;background:#626262;border:2px solid #0a0a0a;border-right:1px solid #585858;border-bottom:1px solid #585858"></div>
<div style="position:absolute;left:227.7px;top:270px;width:11.5px;height:11.5px;background:#626262;border:2px solid #0a0a0a;border-right:1px solid #585858;border-bottom:1px solid #585858"></div>
<span class="t" style="left:253.7px;top:268.99px;">V:</span>
<div style="position:absolute;left:265.5px;top:268.5px;width:47.3px;height:15px;background:linear-gradient(#5c5c5c,#636363);border:2px solid #0c0c0c;border-right:1px solid #686868;border-bottom:1px solid #6c6c6c"></div>
<span class="t" style="left:269.5px;top:269.99px;color:#f4f4f4;">0,0</span>
<div style="position:absolute;left:314.0px;top:268.5px;width:10.9px;height:15px;background:#404040;border:1px solid #4c4c4c;border-right-color:#242424;border-bottom-color:#242424"></div>
<svg style="position:absolute;left:314.0px;top:268.5px" width="10.9" height="15" viewBox="0 0 10.9 15"><path d="M2.2,6.2 L5.3,2.6 L8.4,6.2 Z M2.2,8.8 L5.3,12.4 L8.4,8.8 Z" fill="#f4f4f4"/></svg>
<span class="t" style="left:250.5px;top:288.19px;">W:</span>
<div style="position:absolute;left:265.5px;top:287.8px;width:47.3px;height:15px;background:linear-gradient(#5c5c5c,#636363);border:2px solid #0c0c0c;border-right:1px solid #686868;border-bottom:1px solid #6c6c6c"></div>
<span class="t" style="left:269.5px;top:289.29px;color:#f4f4f4;">0,0</span>
<div style="position:absolute;left:314.0px;top:287.8px;width:10.9px;height:15px;background:#404040;border:1px solid #4c4c4c;border-right-color:#242424;border-bottom-color:#242424"></div>
<svg style="position:absolute;left:314.0px;top:287.8px" width="10.9" height="15" viewBox="0 0 10.9 15"><path d="M2.2,6.2 L5.3,2.6 L8.4,6.2 Z M2.2,8.8 L5.3,12.4 L8.4,8.8 Z" fill="#f4f4f4"/></svg>
<div style="position:absolute;left:33.8px;top:294.5px;width:10px;height:10px;border-radius:50%;background:#ffffff;border:2.4px solid #0a0a0a;border-right-color:#333;border-bottom-color:#333"></div>
<span class="t" style="left:50px;top:293.69px;letter-spacing:-1.141px;">UV</span>
<div style="position:absolute;left:73.3px;top:294.5px;width:10px;height:10px;border-radius:50%;background:#5c5c5c;border:2px solid #0a0a0a;border-right-color:#333;border-bottom-color:#333"></div>
<span class="t" style="left:89.5px;top:293.69px;letter-spacing:-1.117px;">VW</span>
<div style="position:absolute;left:117.5px;top:294.5px;width:10px;height:10px;border-radius:50%;background:#5c5c5c;border:2px solid #0a0a0a;border-right-color:#333;border-bottom-color:#333"></div>
<span class="t" style="left:133.8px;top:293.69px;letter-spacing:-0.814px;">WU</span>
<span class="t" style="left:19.7px;top:316.39px;letter-spacing:-0.265px;">Blur:</span>
<div style="position:absolute;left:47.7px;top:315.5px;width:48.3px;height:15px;background:linear-gradient(#5c5c5c,#636363);border:2px solid #0c0c0c;border-right:1px solid #686868;border-bottom:1px solid #6c6c6c"></div>
<span class="t" style="left:51.7px;top:316.99px;color:#f4f4f4;">1,0</span>
<div style="position:absolute;left:97.2px;top:315.5px;width:10.9px;height:15px;background:#404040;border:1px solid #4c4c4c;border-right-color:#242424;border-bottom-color:#242424"></div>
<svg style="position:absolute;left:97.2px;top:315.5px" width="10.9" height="15" viewBox="0 0 10.9 15"><path d="M2.2,6.2 L5.3,2.6 L8.4,6.2 Z M2.2,8.8 L5.3,12.4 L8.4,8.8 Z" fill="#f4f4f4"/></svg>
<span class="t" style="left:115.5px;top:316.39px;letter-spacing:0.059px;">Blur offset:</span>
<div style="position:absolute;left:172.4px;top:315.5px;width:48.6px;height:15px;background:linear-gradient(#5c5c5c,#636363);border:2px solid #0c0c0c;border-right:1px solid #686868;border-bottom:1px solid #6c6c6c"></div>
<span class="t" style="left:176.4px;top:316.99px;color:#f4f4f4;">0,0</span>
<div style="position:absolute;left:222.2px;top:315.5px;width:10.9px;height:15px;background:#404040;border:1px solid #4c4c4c;border-right-color:#242424;border-bottom-color:#242424"></div>
<svg style="position:absolute;left:222.2px;top:315.5px" width="10.9" height="15" viewBox="0 0 10.9 15"><path d="M2.2,6.2 L5.3,2.6 L8.4,6.2 Z M2.2,8.8 L5.3,12.4 L8.4,8.8 Z" fill="#f4f4f4"/></svg>
<div style="position:absolute;left:266.7px;top:313.6px;width:57.8px;height:18.7px;background:linear-gradient(#515151,#494949);border:1px solid #727272;border-right-color:#1e1e1e;border-bottom-color:#1e1e1e;box-shadow:1px 1px 0 #383838"></div>
<span class="t" style="left:279.24px;top:316.04px;letter-spacing:-0.216px;color:#f4f4f4;">Rotate</span>
<div style="position:absolute;left:14.2px;top:351.7px;width:321.0px;height:15.8px;border:1px solid #8a8a8a;background:#404040"></div>
<span class="t" style="left:161.0px;top:353.19px;letter-spacing:-0.225px;color:#f4f4f4;">Noise</span>
<svg style="position:absolute;left:18.200000000000045px;top:356.09999999999997px" width="7" height="7" viewBox="0 0 7 7"><path d="M0,3.5 h7 M3.5,0 v7" stroke="#fff" stroke-width="1.6"/></svg>
<div style="position:absolute;left:10.5px;top:355.7px;width:2.5px;height:8px;border:1px solid #2a2a2a;border-right:none"></div>
<div style="position:absolute;left:337px;top:355.7px;width:2.5px;height:8px;border:1px solid #2a2a2a;border-left:none"></div>
<div style="position:absolute;left:9.7px;top:379px;width:329.6px;height:286.6px;border:1px solid #141414;box-shadow:inset 0 0 0 1px #565656"></div>
<div style="position:absolute;left:14.2px;top:371.5px;width:321.0px;height:15.8px;border:1px solid #8a8a8a;background:#404040"></div>
<span class="t" style="left:129.3px;top:372.99px;letter-spacing:-0.222px;color:#f4f4f4;">Bitmap Parameters</span>
<div style="position:absolute;left:18.5px;top:379.1px;width:4px;height:1.6px;background:#fff"></div>
<span class="t" style="left:19.7px;top:401.69px;letter-spacing:-0.371px;">Bitmap:</span>
<div style="position:absolute;left:59.3px;top:398px;width:269.1px;height:18.5px;background:linear-gradient(#515151,#494949);border:1px solid #727272;border-right-color:#1e1e1e;border-bottom-color:#1e1e1e;box-shadow:1px 1px 0 #383838"></div>
<span class="t" style="left:62.55px;top:401.54px;letter-spacing:-0.111px;color:#f4f4f4;">…ая папка\null, talisman\ball\Cielo urinal\NOKEN0.jpg</span>
<div style="position:absolute;left:20.7px;top:423px;width:60.3px;height:19.3px;background:linear-gradient(#515151,#494949);border:1px solid #727272;border-right-color:#1e1e1e;border-bottom-color:#1e1e1e;box-shadow:1px 1px 0 #383838"></div>
<span class="t" style="left:33.32px;top:425.74px;letter-spacing:-0.232px;color:#f4f4f4;">Reload</span>
<div style="position:absolute;left:157.7px;top:429.1px;width:173.3px;height:130.8px;border:1px solid #181818;box-shadow:1px 1px 0 #565656, inset 1px 1px 0 #565656"></div>
<div style="position:absolute;left:165px;top:427.1px;width:100.8px;height:5px;background:#444"></div>
<span class="t" style="left:167px;top:423.59px;letter-spacing:-0.215px;">Cropping/Placement</span>
<div style="position:absolute;left:181.6px;top:450px;width:12px;height:12px;background:#626262;border:2px solid #0a0a0a;border-right:1px solid #585858;border-bottom:1px solid #585858"></div>
<span class="t" style="left:199.8px;top:451.29px;letter-spacing:-0.166px;">Apply</span>
<div style="position:absolute;left:246.4px;top:446px;width:73.3px;height:18.8px;background:linear-gradient(#515151,#494949);border:1px solid #727272;border-right-color:#1e1e1e;border-bottom-color:#1e1e1e;box-shadow:1px 1px 0 #383838"></div>
<span class="t" style="left:254.75px;top:449.49px;letter-spacing:-0.229px;color:#f4f4f4;">View Image</span>
<div style="position:absolute;left:193.2px;top:475px;width:10px;height:10px;border-radius:50%;background:#ffffff;border:2.4px solid #0a0a0a;border-right-color:#333;border-bottom-color:#333"></div>
<span class="t" style="left:209.4px;top:473.89px;letter-spacing:-0.311px;">Crop</span>
<div style="position:absolute;left:246.2px;top:475px;width:10px;height:10px;border-radius:50%;background:#5c5c5c;border:2px solid #0a0a0a;border-right-color:#333;border-bottom-color:#333"></div>
<span class="t" style="left:261.8px;top:473.89px;letter-spacing:-0.346px;">Place</span>
<span class="t" style="left:167.6px;top:496.69px;">U:</span>
<div style="position:absolute;left:179.5px;top:494.8px;width:43.5px;height:15px;background:linear-gradient(#5c5c5c,#636363);border:2px solid #0c0c0c;border-right:1px solid #686868;border-bottom:1px solid #6c6c6c"></div>
<span class="t" style="left:183.5px;top:496.29px;color:#f4f4f4;">0,0</span>
<div style="position:absolute;left:224.2px;top:494.8px;width:10.9px;height:15px;background:#404040;border:1px solid #4c4c4c;border-right-color:#242424;border-bottom-color:#242424"></div>
<svg style="position:absolute;left:224.2px;top:494.8px" width="10.9" height="15" viewBox="0 0 10.9 15"><path d="M2.2,6.2 L5.3,2.6 L8.4,6.2 Z M2.2,8.8 L5.3,12.4 L8.4,8.8 Z" fill="#f4f4f4"/></svg>
<span class="t" style="left:250.6px;top:496.69px;">W:</span>
<div style="position:absolute;left:265.7px;top:494.8px;width:42.8px;height:15px;background:linear-gradient(#5c5c5c,#636363);border:2px solid #0c0c0c;border-right:1px solid #686868;border-bottom:1px solid #6c6c6c"></div>
<span class="t" style="left:269.7px;top:496.29px;color:#f4f4f4;">1,0</span>
<div style="position:absolute;left:309.7px;top:494.8px;width:10.9px;height:15px;background:#404040;border:1px solid #4c4c4c;border-right-color:#242424;border-bottom-color:#242424"></div>
<svg style="position:absolute;left:309.7px;top:494.8px" width="10.9" height="15" viewBox="0 0 10.9 15"><path d="M2.2,6.2 L5.3,2.6 L8.4,6.2 Z M2.2,8.8 L5.3,12.4 L8.4,8.8 Z" fill="#f4f4f4"/></svg>
<span class="t" style="left:168.6px;top:515.69px;">V:</span>
<div style="position:absolute;left:179.5px;top:514.7px;width:43.5px;height:15px;background:linear-gradient(#5c5c5c,#636363);border:2px solid #0c0c0c;border-right:1px solid #686868;border-bottom:1px solid #6c6c6c"></div>
<span class="t" style="left:183.5px;top:516.19px;color:#f4f4f4;">0,0</span>
<div style="position:absolute;left:224.2px;top:514.7px;width:10.9px;height:15px;background:#404040;border:1px solid #4c4c4c;border-right-color:#242424;border-bottom-color:#242424"></div>
<svg style="position:absolute;left:224.2px;top:514.7px" width="10.9" height="15" viewBox="0 0 10.9 15"><path d="M2.2,6.2 L5.3,2.6 L8.4,6.2 Z M2.2,8.8 L5.3,12.4 L8.4,8.8 Z" fill="#f4f4f4"/></svg>
<span class="t" style="left:251.6px;top:515.09px;">H:</span>
<div style="position:absolute;left:265.7px;top:514.7px;width:42.8px;height:15px;background:linear-gradient(#5c5c5c,#636363);border:2px solid #0c0c0c;border-right:1px solid #686868;border-bottom:1px solid #6c6c6c"></div>
<span class="t" style="left:269.7px;top:516.19px;color:#f4f4f4;">1,0</span>
<div style="position:absolute;left:309.7px;top:514.7px;width:10.9px;height:15px;background:#404040;border:1px solid #4c4c4c;border-right-color:#242424;border-bottom-color:#242424"></div>
<svg style="position:absolute;left:309.7px;top:514.7px" width="10.9" height="15" viewBox="0 0 10.9 15"><path d="M2.2,6.2 L5.3,2.6 L8.4,6.2 Z M2.2,8.8 L5.3,12.4 L8.4,8.8 Z" fill="#f4f4f4"/></svg>
<div style="position:absolute;left:165.2px;top:536.3px;width:12px;height:12px;background:#626262;border:2px solid #0a0a0a;border-right:1px solid #585858;border-bottom:1px solid #585858"></div>
<span class="t" style="left:183px;top:536.49px;letter-spacing:-0.125px;color:#9c9c9c;">Jitter Placement:</span>
<div style="position:absolute;left:268.8px;top:535.5px;width:39.5px;height:15px;background:linear-gradient(#5c5c5c,#636363);border:2px solid #0c0c0c;border-right:1px solid #686868;border-bottom:1px solid #6c6c6c"></div>
<span class="t" style="left:272.8px;top:536.99px;color:#a8a8a8;">1,0</span>
<div style="position:absolute;left:310.2px;top:535.5px;width:10.9px;height:15px;background:#404040;border:1px solid #4c4c4c;border-right-color:#242424;border-bottom-color:#242424"></div>
<svg style="position:absolute;left:310.2px;top:535.5px" width="10.9" height="15" viewBox="0 0 10.9 15"><path d="M2.2,6.2 L5.3,2.6 L8.4,6.2 Z M2.2,8.8 L5.3,12.4 L8.4,8.8 Z" fill="#f4f4f4"/></svg>
<div style="position:absolute;left:20.3px;top:462.9px;width:128.7px;height:61.1px;border:1px solid #181818;box-shadow:1px 1px 0 #565656, inset 1px 1px 0 #565656"></div>
<div style="position:absolute;left:26.7px;top:460.9px;width:43.6px;height:5px;background:#444"></div>
<span class="t" style="left:28.7px;top:458.09px;letter-spacing:-0.058px;">Filtering</span>
<div style="position:absolute;left:37.2px;top:475.5px;width:10px;height:10px;border-radius:50%;background:#ffffff;border:2.4px solid #0a0a0a;border-right-color:#333;border-bottom-color:#333"></div>
<span class="t" style="left:53.5px;top:475.29px;letter-spacing:-0.323px;">Pyramidal</span>
<div style="position:absolute;left:37.2px;top:491.3px;width:10px;height:10px;border-radius:50%;background:#5c5c5c;border:2px solid #0a0a0a;border-right-color:#333;border-bottom-color:#333"></div>
<span class="t" style="left:53.5px;top:491.29px;letter-spacing:-0.4px;">Summed Area</span>
<div style="position:absolute;left:37.2px;top:506.5px;width:10px;height:10px;border-radius:50%;background:#5c5c5c;border:2px solid #0a0a0a;border-right-color:#333;border-bottom-color:#333"></div>
<span class="t" style="left:53.5px;top:505.69px;letter-spacing:-0.474px;">None</span>
<div style="position:absolute;left:20.3px;top:535.8px;width:128.7px;height:48.6px;border:1px solid #181818;box-shadow:1px 1px 0 #565656, inset 1px 1px 0 #565656"></div>
<div style="position:absolute;left:26.7px;top:533.8px;width:114.3px;height:5px;background:#444"></div>
<span class="t" style="left:28.7px;top:530.99px;letter-spacing:-0.069px;">Mono Channel Output:</span>
<div style="position:absolute;left:37.2px;top:550.4px;width:10px;height:10px;border-radius:50%;background:#ffffff;border:2.4px solid #0a0a0a;border-right-color:#333;border-bottom-color:#333"></div>
<span class="t" style="left:53.5px;top:550.19px;letter-spacing:-0.209px;">RGB Intensity</span>
<div style="position:absolute;left:37.2px;top:566.4px;width:10px;height:10px;border-radius:50%;background:#5c5c5c;border:2px solid #0a0a0a;border-right-color:#333;border-bottom-color:#333"></div>
<span class="t" style="left:53.5px;top:566.19px;letter-spacing:-0.225px;color:#a0a0a0;">Alpha</span>
<div style="position:absolute;left:20.3px;top:598.8px;width:128.7px;height:53.1px;border:1px solid #181818;box-shadow:1px 1px 0 #565656, inset 1px 1px 0 #565656"></div>
<div style="position:absolute;left:26.7px;top:596.8px;width:108.6px;height:5px;background:#444"></div>
<span class="t" style="left:28.7px;top:593.99px;letter-spacing:-0.18px;">RGB Channel Output:</span>
<div style="position:absolute;left:37.2px;top:613px;width:10px;height:10px;border-radius:50%;background:#ffffff;border:2.4px solid #0a0a0a;border-right-color:#333;border-bottom-color:#333"></div>
<span class="t" style="left:53.5px;top:612.79px;">RGB</span>
<div style="position:absolute;left:37.2px;top:630px;width:10px;height:10px;border-radius:50%;background:#5c5c5c;border:2px solid #0a0a0a;border-right-color:#333;border-bottom-color:#333"></div>
<span class="t" style="left:53.5px;top:629.89px;letter-spacing:-0.214px;color:#a0a0a0;">Alpha as Gray</span>
<div style="position:absolute;left:158.3px;top:572.8px;width:172.7px;height:61.9px;border:1px solid #181818;box-shadow:1px 1px 0 #565656, inset 1px 1px 0 #565656"></div>
<div style="position:absolute;left:165.6px;top:570.8px;width:67.7px;height:5px;background:#444"></div>
<span class="t" style="left:167.6px;top:568.29px;letter-spacing:-0.279px;">Alpha Source</span>
<div style="position:absolute;left:193.2px;top:584px;width:10px;height:10px;border-radius:50%;background:#5c5c5c;border:2px solid #0a0a0a;border-right-color:#333;border-bottom-color:#333"></div>
<span class="t" style="left:209.4px;top:583.99px;letter-spacing:-0.222px;color:#a0a0a0;">Image Alpha</span>
<div style="position:absolute;left:193.2px;top:600.2px;width:10px;height:10px;border-radius:50%;background:#5c5c5c;border:2px solid #0a0a0a;border-right-color:#333;border-bottom-color:#333"></div>
<span class="t" style="left:209.4px;top:600.09px;letter-spacing:-0.209px;">RGB Intensity</span>
<div style="position:absolute;left:193.2px;top:617.3px;width:10px;height:10px;border-radius:50%;background:#ffffff;border:2.4px solid #0a0a0a;border-right-color:#333;border-bottom-color:#333"></div>
<span class="t" style="left:209.4px;top:617.09px;letter-spacing:-0.233px;">None (Opaque)</span>
<div style="position:absolute;left:179.7px;top:642.8px;width:12px;height:12px;background:#626262;border:2px solid #0a0a0a;border-right:1px solid #585858;border-bottom:1px solid #585858"></div>
<svg style="position:absolute;left:180.5px;top:643.8px" width="12" height="12" viewBox="0 0 12 12"><path d="M2.8,4.6 L5.2,7.6 L9.6,1.8" fill="none" stroke="#ffffff" stroke-width="2"/></svg>
<span class="t" style="left:197.5px;top:644.09px;letter-spacing:-0.22px;color:#b0b0b0;">Premultiplied Alpha</span>
<div style="position:absolute;left:14.2px;top:673.2px;width:321.0px;height:15.8px;border:1px solid #8a8a8a;background:#404040"></div>
<span class="t" style="left:162.96px;top:674.69px;letter-spacing:-0.24px;color:#f4f4f4;">Time</span>
<svg style="position:absolute;left:18.200000000000045px;top:677.6px" width="7" height="7" viewBox="0 0 7 7"><path d="M0,3.5 h7 M3.5,0 v7" stroke="#fff" stroke-width="1.6"/></svg>
<div style="position:absolute;left:10.5px;top:677.2px;width:2.5px;height:8px;border:1px solid #2a2a2a;border-right:none"></div>
<div style="position:absolute;left:337px;top:677.2px;width:2.5px;height:8px;border:1px solid #2a2a2a;border-left:none"></div>
<div style="position:absolute;left:14.2px;top:693.1px;width:321.0px;height:15.8px;border:1px solid #8a8a8a;background:#404040"></div>
<span class="t" style="left:158.64px;top:694.59px;letter-spacing:-0.22px;color:#f4f4f4;">Output</span>
<svg style="position:absolute;left:18.200000000000045px;top:697.5px" width="7" height="7" viewBox="0 0 7 7"><path d="M0,3.5 h7 M3.5,0 v7" stroke="#fff" stroke-width="1.6"/></svg>
<div style="position:absolute;left:10.5px;top:697.1px;width:2.5px;height:8px;border:1px solid #2a2a2a;border-right:none"></div>
<div style="position:absolute;left:337px;top:697.1px;width:2.5px;height:8px;border:1px solid #2a2a2a;border-left:none"></div>
</div>
</div></body></html>
